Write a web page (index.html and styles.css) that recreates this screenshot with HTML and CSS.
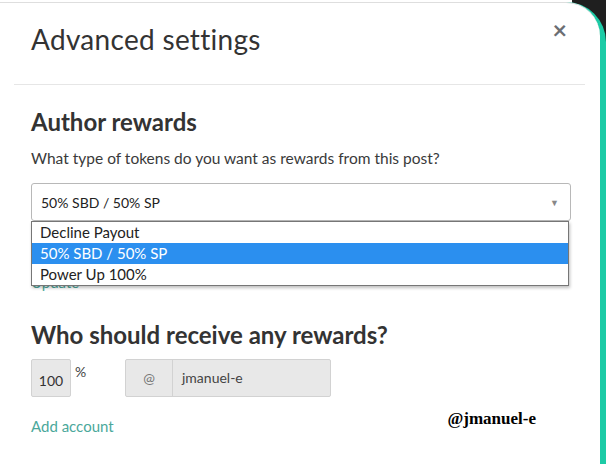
FILE: index.html
```html
<!DOCTYPE html>
<html lang="en">
<head>
  <meta charset="UTF-8">
  <meta name="viewport" content="width=device-width, initial-scale=1.0">
  <title>Advanced settings</title>
  <link rel="stylesheet" href="styles.css">
</head>
<body>
  <div class="screen">
    <div class="edge">
      <div class="modal">
        <div class="modal-head">
          <h1>Advanced settings</h1>
          <span class="close">&times;</span>
        </div>
        <div class="modal-body">
          <h2>Author rewards</h2>
          <p class="hint">What type of tokens do you want as rewards from this post?</p>
          <div class="picker">
            <div class="select">
              <span>50% SBD / 50% SP</span>
              <span class="caret">&#9660;</span>
            </div>
            <ul class="options">
              <li>Decline Payout</li>
              <li class="active">50% SBD / 50% SP</li>
              <li>Power Up 100%</li>
            </ul>
            <a class="link update">Update</a>
          </div>
          <h2 class="who">Who should receive any rewards?</h2>
          <div class="beneficiary">
            <span class="pct">100</span>
            <span class="pct-sign">%</span>
            <div class="account">
              <span class="at">@</span>
              <span class="name">jmanuel-e</span>
            </div>
          </div>
          <div class="footer-row">
            <a class="link">Add account</a>
            <span class="mark">@jmanuel-e</span>
          </div>
        </div>
      </div>
    </div>
  </div>
</body>
</html>
```

FILE: styles.css
```css
body, html {
  margin: 0;
  padding: 0;
  font-family: 'Lato', 'Noto Sans', sans-serif;
  box-sizing: border-box;
}
.screen {
  width: 606px;
  height: 464px;
  overflow: hidden;
  background: linear-gradient(to right, #fff 572px, #1f1f1f 572px);
}
.edge {
  margin-top: 2px;
  height: 462px;
  background: #1dcba6;
  border-top-right-radius: 40px;
  padding-right: 6px;
}
.modal {
  height: 100%;
  background: #fff;
  border-top: 1px solid #dedede;
  border-top-right-radius: 34px;
}
.modal-head {
  display: flex;
  justify-content: space-between;
  margin: 0 15px 0 14px;
  padding: 0 17px 0 17px;
  height: 81px;
  border-bottom: 1px solid #e6e6e6;
}
.modal-head h1 {
  margin: 19px 0 0;
  font-size: 28px;
  font-weight: 400;
  color: #333;
  letter-spacing: 0.3px;
}
.close {
  margin: 11px 1px 0 0;
  font-size: 25px;
  font-weight: bold;
  color: #6b6e73;
}
.modal-body {
  padding: 0 31px;
}
.modal-body h2 {
  margin: 22px 0 0;
  font-size: 24px;
  font-weight: bold;
  color: #333;
}
.hint {
  margin: 13px 0 0;
  font-size: 15.5px;
  color: #3a3a3a;
}
.picker {
  margin-top: 16px;
  width: 540px;
  position: relative;
}
.select {
  display: flex;
  justify-content: space-between;
  align-items: center;
  height: 36px;
  padding: 0 9px;
  border: 1px solid #b8b8b8;
  border-radius: 3px;
  font-size: 14px;
  color: #222;
}
.caret {
  font-size: 9px;
  color: #888;
  margin-right: 2px;
}
.options {
  position: absolute;
  top: 38px;
  left: 0;
  width: 536px;
  margin: 0;
  padding: 0;
  list-style: none;
  background: #fff;
  border: 1px solid #767676;
  box-shadow: 1px 2px 3px rgba(0, 0, 0, 0.25);
  z-index: 2;
}
.options li {
  height: 21px;
  line-height: 21px;
  padding-left: 8px;
  font-size: 15px;
  color: #222;
}
.options li.active {
  background: #2b8fef;
  color: #fff;
}
.link {
  display: block;
  font-size: 15px;
  color: #4ba89b;
}
.update {
  margin-top: 52px;
  line-height: 18px;
}
.modal-body h2.who {
  margin-top: 29px;
}
.beneficiary {
  display: flex;
  align-items: flex-start;
  margin-top: 10px;
}
.pct {
  width: 40px;
  height: 38px;
  line-height: 42px;
  box-sizing: border-box;
  text-align: center;
  background: #e8e8e8;
  border: 1px solid #d2d2d2;
  border-radius: 2px;
  font-size: 14px;
  color: #333;
}
.pct-sign {
  margin: 4px 0 0 4px;
  width: 50px;
  font-size: 14px;
  color: #444;
}
.account {
  display: flex;
  width: 206px;
  height: 38px;
  box-sizing: border-box;
  background: #e8e8e8;
  border: 1px solid #d2d2d2;
  border-radius: 2px;
  font-size: 14px;
  color: #444;
}
.at {
  width: 46px;
  border-right: 1px solid #d2d2d2;
  text-align: center;
  line-height: 36px;
  color: #777;
}
.name {
  padding-left: 9px;
  line-height: 36px;
}
.footer-row {
  display: flex;
  justify-content: space-between;
  align-items: center;
  margin-top: 20px;
  padding-right: 33px;
}
.mark {
  font-family: 'Liberation Serif', serif;
  font-weight: bold;
  font-size: 17px;
  color: #000;
  margin-top: -14px;
}
```
